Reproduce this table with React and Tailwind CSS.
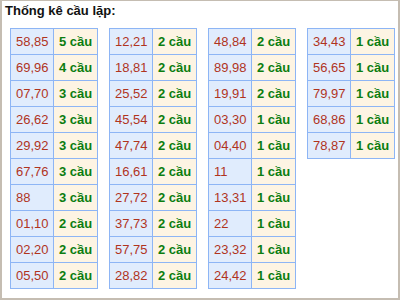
import React from "react";

const TABLES = [
  [["58,85", 5], ["69,96", 4], ["07,70", 3], ["26,62", 3], ["29,92", 3], ["67,76", 3], ["88", 3], ["01,10", 2], ["02,20", 2], ["05,50", 2]],
  [["12,21", 2], ["18,81", 2], ["25,52", 2], ["45,54", 2], ["47,74", 2], ["16,61", 2], ["27,72", 2], ["37,73", 2], ["57,75", 2], ["28,82", 2]],
  [["48,84", 2], ["89,98", 2], ["19,91", 2], ["03,30", 1], ["04,40", 1], ["11", 1], ["13,31", 1], ["22", 1], ["23,32", 1], ["24,42", 1]],
  [["34,43", 1], ["56,65", 1], ["79,97", 1], ["68,86", 1], ["78,87", 1]],
];

function CauTable({ rows }) {
  return (
    <div className="w-[88px] border-t border-l border-[#8db5f5]">
      {rows.map(([pair, n], i) => (
        <div key={i} className="flex h-[26px]">
          <div className="w-[43px] border-r border-b border-[#8db5f5] bg-[#e0ecfd] pl-[5px] flex items-center text-[#b0341e]">
            {pair}
          </div>
          <div className="w-[44px] border-r border-b border-[#8db5f5] bg-[#fdf4e3] pl-[5px] flex items-center font-bold text-[#0c7d10]">
            {n} cầu
          </div>
        </div>
      ))}
    </div>
  );
}

export default function App() {
  return (
    <div
      className="w-[400px] h-[300px] bg-white border-t border-x-2 border-b-2 border-[#c5bdb2] overflow-hidden text-[13px]"
      style={{ fontFamily: '"Liberation Sans", Arial, sans-serif' }}
    >
      <div className="pl-[3px] pt-[2px] leading-[15px] font-bold text-[#111]">Thống kê cầu lặp:</div>
      <div className="flex items-start gap-[11px] pl-[8px] mt-[10px]">
        {TABLES.map((rows, i) => (
          <CauTable key={i} rows={rows} />
        ))}
      </div>
    </div>
  );
}
